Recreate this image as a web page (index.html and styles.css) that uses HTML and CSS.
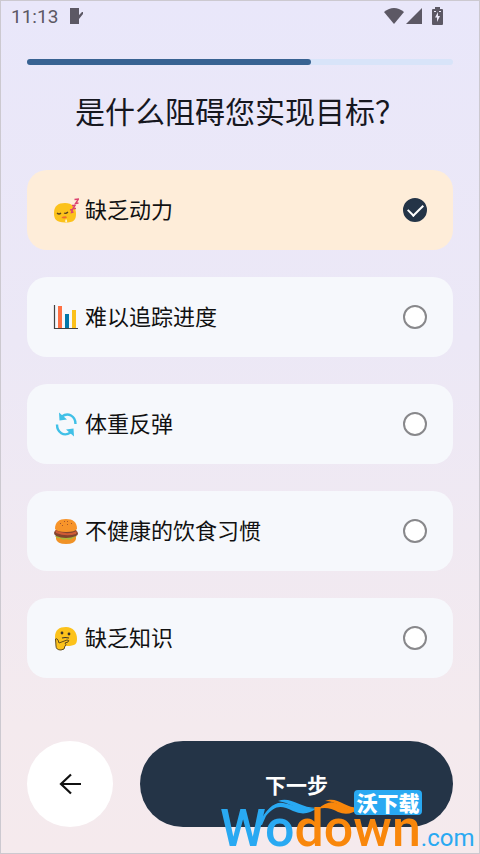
FILE: index.html
```html
<!DOCTYPE html>
<html lang="zh-CN">
<head>
  <meta charset="UTF-8">
  <meta name="viewport" content="width=device-width, initial-scale=1.0">
  <title>是什么阻碍您实现目标？</title>
  <link rel="stylesheet" href="styles.css">
</head>

<body>
  <div class="screen">
    <!-- Status bar -->
    <header class="status-bar">
      <span class="clock">11:13</span>
      <svg class="note-icon" viewBox="0 0 14 16" width="14" height="16">
        <path d="M0 0H9V7L12 4H13V6L9 11V16H0Z" fill="#5c5864"/>
      </svg>
      <div class="status-icons">
        <svg viewBox="0 0 20 16" width="20" height="16">
          <path d="M0 4Q10 -4 20 4L10 16Z" fill="#5c5864"/>
        </svg>
        <svg viewBox="0 0 16 16" width="16" height="16">
          <path d="M16 0V16H0Z" fill="#5c5864"/>
        </svg>
        <svg class="battery" viewBox="0 0 11 18" width="11" height="18">
          <path d="M3 0H8V2H10Q11 2 11 3V17Q11 18 10 18H1Q0 18 0 17V3Q0 2 1 2H3Z" fill="#5c5864"/>
          <path d="M6 5L3 10.500H5V15L8 9H6ZM2 4H4V5H2ZM7 4H9V5H7Z" fill="#ebe8f8"/>
        </svg>
      </div>
    </header>

    <div class="progress">
      <div class="progress-bar" style="width: 66.67%;"></div>
    </div>

    <h1 class="title">是什么阻碍您实现目标？</h1>

    <!-- Options -->
    <form class="options">
      <label class="option">
        <svg class="emoji" viewBox="0 0 26 26" width="26" height="26">
          <path d="M1 16C1 9 5 6 12 6C19 6 23 10 23 17C23 23 21 25.500 12 25.500C3 25.500 1 22 1 16Z" fill="#fcc21b"/>
          <path d="M4 16Q6 18 8 16M11 16Q13 17 15 15" fill="none" stroke="#5a4420" stroke-width="1.200"/>
          <path d="M8.500 21Q9 19 11 19.500Q13 18.500 14 20.500Q12 22 8.500 21Z" fill="#ed6c30"/>
          <path d="M13 22Q15 24 13.500 25.500Q11 25 13 22Z" fill="#fff3d0"/>
          <path d="M17 13L19.500 12.500L18.500 15.500L20.500 15M19 8.500L22 8.500L20 11.500L23 11.500M21.500 2.500L25.500 2L22.500 6.500L25.500 6" fill="none" stroke="#dc4370" stroke-width="1.400"/>
        </svg>
        <span class="option-text">缺乏动力</span>
        <input type="checkbox" name="obstacle" value="motivation" checked>
      </label>

      <label class="option">
        <svg class="emoji" viewBox="0 0 26 26" width="26" height="26">
          <path d="M1.500 1V24.500H25" fill="none" stroke="#424242" stroke-width="1.200"/>
          <path d="M5 2H9V24H5Z" fill="#ff7043"/>
          <path d="M12 10H16V24H12Z" fill="#0277a9"/>
          <path d="M19 6H23V24H19Z" fill="#fbc11b"/>
        </svg>
        <span class="option-text">难以追踪进度</span>
        <input type="checkbox" name="obstacle" value="tracking">
      </label>

      <label class="option">
        <svg class="emoji" viewBox="0 0 26 26" width="26" height="26">
          <path d="M9 5.500C15 1 22.500 5 22.500 13M17.500 21.500C11 26 4 21.500 4 13.500" fill="none" stroke="#40c0e7" stroke-width="2.400"/>
          <path d="M6 1.500L6.500 9.500L14 8.500ZM21 25.500L20.500 17.500L13 18.500Z" fill="#40c0e7"/>
        </svg>
        <span class="option-text">体重反弹</span>
        <input type="checkbox" name="obstacle" value="rebound">
      </label>

      <label class="option">
        <svg class="emoji" viewBox="0 0 26 26" width="26" height="26">
          <path d="M3 18H23V21Q22 26 13 26T3 21Z" fill="#f09226"/>
          <path d="M2 18Q4 21 7 20Q10 23 13 21Q17 23 20 20L24 18Z" fill="#a7b83b"/>
          <path d="M3 12H23Q27 16 23 18Q13 22 3 18Q-1 15 3 12Z" fill="#81442e"/>
          <path d="M2 12Q13 18 24 13L23 16Q13 19 3 15Z" fill="#cf5b36"/>
          <path d="M2 11C2 4 6 1 13 1S24 4 24 11Q22 14 13 14T2 11Z" fill="#f7942a"/>
          <path d="M7 5L8 6M11 3L12 4M15 3L14 4M19 5L18 6M9 8L10 7M14 6L15 7" stroke="#a9562a" stroke-width="1"/>
        </svg>
        <span class="option-text">不健康的饮食习惯</span>
        <input type="checkbox" name="obstacle" value="diet">
      </label>

      <label class="option">
        <svg class="emoji" viewBox="0 0 26 26" width="26" height="26">
          <path d="M2 12C2 5 6 2 13 2C20 2 24 7 24 14C24 19 22 21 14 21C4 21 2 18 2 12Z" fill="#fcc21b"/>
          <circle cx="9" cy="8" r="1.400" fill="#38322b"/>
          <circle cx="16" cy="9" r="1.400" fill="#38322b"/>
          <path d="M9 13Q12 12 16 13" fill="none" stroke="#38322b" stroke-width="1.200"/>
          <path d="M2.500 14Q4 13 5 15L6 18L14 15Q17 15 15 17L12 18Q14 20 12 21Q12 25 8 25Q3 25 3 21Z" fill="#fcc21b" stroke="#624b1c" stroke-width="1"/>
        </svg>
        <span class="option-text">缺乏知识</span>
        <input type="checkbox" name="obstacle" value="knowledge">
      </label>
    </form>

    <!-- Navigation -->
    <footer class="actions">
      <button type="button" class="back" aria-label="返回">
        <svg viewBox="0 0 24 24" width="24" height="24">
          <path d="M13 2.500L3 12L13 21.500M3 12H23" fill="none" stroke="#111" stroke-width="2.200"/>
        </svg>
      </button>
      <button type="button" class="next">下一步</button>
    </footer>

    <!-- Site mark -->
    <div class="mark">
      <svg class="mark-waves" viewBox="0 0 146 26" width="146" height="26">
        <path d="M0 26Q12 2 25 4C37 6 45 12 59 9Q48 18 35 12C23 6 17 6 8 17L4 26Z" fill="#29a9f2"/>
        <path d="M20 2C33 -3 41 9 59 9Q44 12 35 7Q27 3 20 2Z" fill="#29a9f2"/>
        <path d="M60 10Q71 0 80 5Q91 12 102 9Q91 18 80 13Q70 7 60 10Z" fill="#f9870b"/>
        <path d="M67 2C80 -3 85 9 102 9Q90 12 82 7Q75 2 67 2Z" fill="#f9870b"/>
      </svg>
      <span class="mark-tag">沃下载</span>
      <div class="mark-name"><span class="blue">Wo</span><span class="orange">down</span><span class="domain">.com</span></div>
    </div>
  </div>
</body>
</html>
```
FILE: styles.css
```css
* 
{
  box-sizing: border-box;
}

body 
{
  margin: 0;
  font-family: "Noto Sans CJK SC", sans-serif;
  color: #111;
}

.screen 
{
  position: relative;
  display: flex;
  flex-direction: column;
  min-height: 100vh;
  padding: 0 26px 26px;
  border: 1px solid #ccc9d0;
  background: linear-gradient(#e9e7fa, #ece8f6 40%, #f4eaee 85%, #f5eaed);
}

/* Status bar */
.status-bar 
{
  display: flex;
  align-items: center;
  height: 30px;
  margin: 0 10px 0 -16px;
}

.clock 
{
  font-family: Roboto, sans-serif;
  font-size: 19px;
  color: #5c5864;
}

.note-icon 
{
  margin-left: 12px;
}

.status-icons 
{
  display: flex;
  align-items: center;
  gap: 2px;
  margin-left: auto;
}

.battery 
{
  margin-left: 8px;
}

/* Progress */
.progress 
{
  height: 6px;
  margin-top: 28px;
  border-radius: 3px;
  background: #d8e4f9;
}

.progress-bar 
{
  height: 6px;
  border-radius: 3px;
  background: #386292;
}

.title 
{
  margin: 24px 0 38px;
  font-size: 30px;
  line-height: 43px;
  font-weight: 400;
  text-align: center;
  color: #16171f;
}

/* Options */
.options 
{
  display: flex;
  flex-direction: column;
  gap: 27px;
}

.option 
{
  display: flex;
  align-items: center;
  gap: 6px;
  height: 80px;
  padding: 0 26px;
  border-radius: 20px;
  background: #f6f8fc;
  cursor: pointer;
}

.option:has(input:checked) 
{
  background: #feedd9;
}

.option-text 
{
  flex: 1;
  padding-bottom: 4px;
  font-size: 22px;
  line-height: 32px;
}

.option input 
{
  display: grid;
  place-items: center;
  appearance: none;
  width: 24px;
  height: 24px;
  margin: 0;
  border: 2px solid #88888b;
  border-radius: 50%;
  background: #fff;
  cursor: pointer;
}

.option input:checked 
{
  border-color: #243447;
  background: #243447;
}

.option input:checked::after 
{
  content: "";
  width: 13px;
  height: 7px;
  margin-bottom: 4px;
  border: solid #fff;
  border-width: 0 0 2px 2px;
  transform: rotate(-45deg);
}

/* Navigation */
.actions 
{
  display: flex;
  gap: 27px;
  margin-top: auto;
  padding-top: 26px;
}

.actions button 
{
  height: 86px;
  padding: 0;
  border: none;
  border-radius: 43px;
  font-family: inherit;
  cursor: pointer;
}

.back 
{
  display: grid;
  place-items: center;
  width: 86px;
  background: #fff;
}

.next 
{
  flex: 1;
  font-size: 21px;
  font-weight: 700;
  color: #fff;
  background: #243447;
}

/* Site mark, lies over the bottom corner */
.mark 
{
  position: absolute;
  right: 5px;
  bottom: 0;
  width: 254px;
  height: 64px;
  pointer-events: none;
}

.mark-waves 
{
  position: absolute;
  left: 38px;
  top: 10px;
}

.mark-tag 
{
  position: absolute;
  left: 134px;
  top: 1px;
  width: 68px;
  border-radius: 4px;
  font-size: 21px;
  line-height: 25px;
  font-weight: 900;
  text-align: center;
  color: #fff;
  background: #29a9f2;
}

.mark-name 
{
  position: absolute;
  left: 0;
  bottom: 0;
  font-family: Roboto, sans-serif;
  font-size: 52px;
  line-height: 48px;
  font-weight: 500;
  white-space: nowrap;
}

.blue 
{
  color: #29a9f2;
}

.orange 
{
  color: #f9870b;
}

.domain 
{
  font-size: 24px;
  line-height: 24px;
  font-weight: 400;
  color: #29a9f2;
}
```
